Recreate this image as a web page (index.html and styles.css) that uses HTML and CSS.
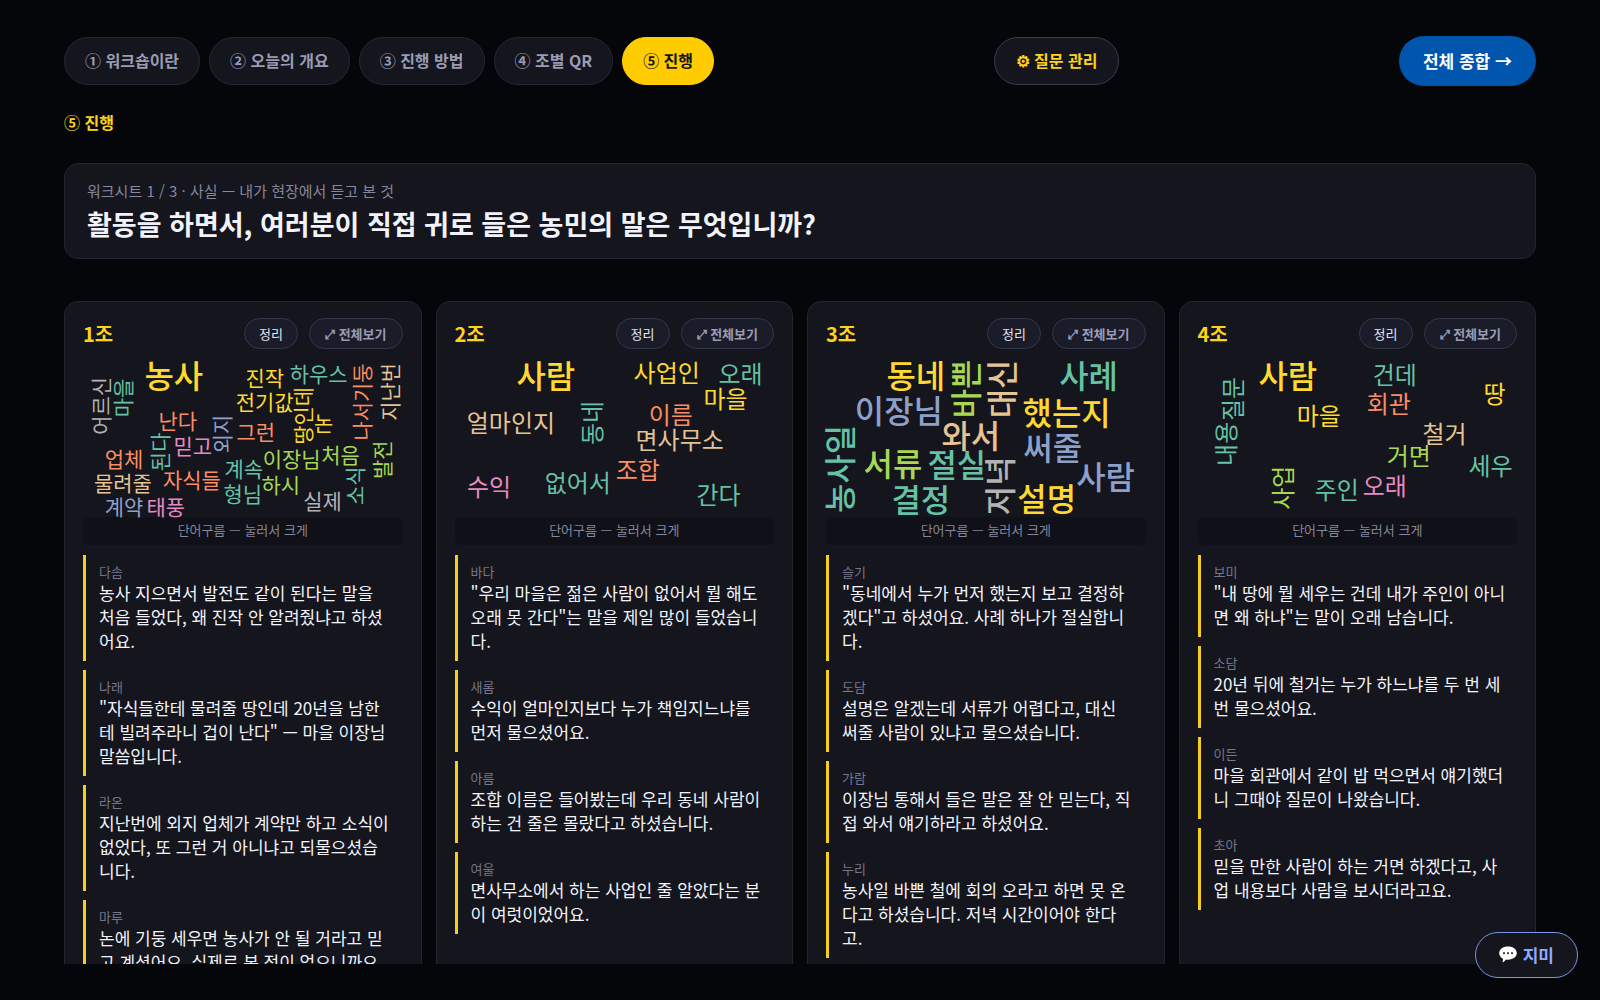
FILE: index.html
```html
<!DOCTYPE html>
<html lang="ko">
  <head>
    <meta charset="UTF-8" />
    <meta name="viewport" content="width=device-width, initial-scale=1.0" />
    <title>워크숍 진행</title>
    <link rel="stylesheet" href="styles.css">
  </head>
  <body>
    <div class="page">
      <header class="topbar">
        <nav class="steps">
          <button class="step">① 워크숍이란</button>
          <button class="step">② 오늘의 개요</button>
          <button class="step">③ 진행 방법</button>
          <button class="step">④ 조별 QR</button>
          <button class="step active">⑤ 진행</button>
        </nav>
        <button class="step manage">⚙ 질문 관리</button>
        <button class="summary">전체 종합 →</button>
      </header>

      <p class="current">⑤ 진행</p>

      <section class="question">
        <p class="sheet">워크시트 1 / 3 · 사실 — 내가 현장에서 듣고 본 것</p>
        <h1>활동을 하면서, 여러분이 직접 귀로 들은 농민의 말은 무엇입니까?</h1>
      </section>

      <main class="groups">
        <section class="group">
          <div class="group-head">
            <h2>1조</h2>
            <button class="pill">정리</button>
            <button class="pill wide">⤢ 전체보기</button>
          </div>
          <button class="cloud">
            <svg class="small" viewBox="0 0 320 160">
              <text class="big yellow" transform="translate(91 17)">농사</text>
              <text class="yellow" transform="translate(182 20)">진작</text>
              <text class="teal" transform="translate(236 16)">하우스</text>
              <text class="yellow" transform="translate(182 44)">전기값</text>
              <text class="yellow" transform="translate(219 59) rotate(-90)">땅인데</text>
              <text class="yellow" transform="translate(241 65)">논</text>
              <text class="gray" transform="translate(17 49) rotate(-90)">어르신</text>
              <text class="teal" transform="translate(39 41) rotate(-90)">마을</text>
              <text class="orange" transform="translate(95 63)">난다</text>
              <text class="blue" transform="translate(138 77) rotate(-90)">외지</text>
              <text class="orange" transform="translate(173 74)">그런</text>
              <text class="orange" transform="translate(278 45) rotate(-90)">나서기둥</text>
              <text class="tan" transform="translate(306 35) rotate(-90)">지난번</text>
              <text class="pink" transform="translate(110 88)">믿고</text>
              <text class="teal" transform="translate(76 95) rotate(-90)">된다</text>
              <text class="orange" transform="translate(41 101)">업체</text>
              <text class="green" transform="translate(209 101)">이장님</text>
              <text class="green" transform="translate(258 97)">처음</text>
              <text class="green" transform="translate(298 103) rotate(-90)">발전</text>
              <text class="teal" transform="translate(271 129) rotate(-90)">소식</text>
              <text class="teal" transform="translate(161 111)">계속</text>
              <text class="tan" transform="translate(40 125)">물려줄</text>
              <text class="orange" transform="translate(109 122)">자식들</text>
              <text class="green" transform="translate(198 127)">하시</text>
              <text class="teal" transform="translate(160 136)">형님</text>
              <text class="gray" transform="translate(240 143)">실제</text>
              <text class="blue" transform="translate(41 149)">계약</text>
              <text class="pink" transform="translate(83 149)">태풍</text>
            </svg>
            <span class="caption">단어구름 — 눌러서 크게</span>
          </button>
          <ul class="answers">
            <li>
              <span class="name">다솜</span>
              <p>농사 지으면서 발전도 같이 된다는 말을 처음 들었다, 왜 진작 안 알려줬냐고 하셨어요.</p>
            </li>
            <li>
              <span class="name">나래</span>
              <p>"자식들한테 물려줄 땅인데 20년을 남한테 빌려주라니 겁이 난다" — 마을 이장님 말씀입니다.</p>
            </li>
            <li>
              <span class="name">라온</span>
              <p>지난번에 외지 업체가 계약만 하고 소식이 없었다, 또 그런 거 아니냐고 되물으셨습니다.</p>
            </li>
            <li>
              <span class="name">마루</span>
              <p>논에 기둥 세우면 농사가 안 될 거라고 믿고 계셨어요. 실제로 본 적이 없으니까요.</p>
            </li>
          </ul>
        </section>

        <section class="group">
          <div class="group-head">
            <h2>2조</h2>
            <button class="pill">정리</button>
            <button class="pill wide">⤢ 전체보기</button>
          </div>
          <button class="cloud">
            <svg class="medium" viewBox="0 0 320 160">
              <text class="big yellow" transform="translate(91 17)">사람</text>
              <text class="yellow" transform="translate(212 15)">사업인</text>
              <text class="teal" transform="translate(286 16)">오래</text>
              <text class="yellow" transform="translate(271 41)">마을</text>
              <text class="tan" transform="translate(56 65)">얼마인지</text>
              <text class="teal" transform="translate(136 66) rotate(-90)">동네</text>
              <text class="orange" transform="translate(216 57)">이름</text>
              <text class="tan" transform="translate(225 82)">면사무소</text>
              <text class="orange" transform="translate(183 112)">조합</text>
              <text class="teal" transform="translate(123 125)">없어서</text>
              <text class="pink" transform="translate(34 129)">수익</text>
              <text class="teal" transform="translate(264 137)">간다</text>
            </svg>
            <span class="caption">단어구름 — 눌러서 크게</span>
          </button>
          <ul class="answers">
            <li>
              <span class="name">바다</span>
              <p>"우리 마을은 젊은 사람이 없어서 뭘 해도 오래 못 간다"는 말을 제일 많이 들었습니다.</p>
            </li>
            <li>
              <span class="name">새롬</span>
              <p>수익이 얼마인지보다 누가 책임지느냐를 먼저 물으셨어요.</p>
            </li>
            <li>
              <span class="name">아름</span>
              <p>조합 이름은 들어봤는데 우리 동네 사람이 하는 건 줄은 몰랐다고 하셨습니다.</p>
            </li>
            <li>
              <span class="name">여울</span>
              <p>면사무소에서 하는 사업인 줄 알았다는 분이 여럿이었어요.</p>
            </li>
          </ul>
        </section>

        <section class="group">
          <div class="group-head">
            <h2>3조</h2>
            <button class="pill">정리</button>
            <button class="pill wide">⤢ 전체보기</button>
          </div>
          <button class="cloud">
            <svg class="large" viewBox="0 0 320 160">
              <text class="yellow" transform="translate(90 17)">동네</text>
              <text class="green" transform="translate(138 32) rotate(-90)">바쁜</text>
              <text class="tan" transform="translate(174 32) rotate(-90)">대신</text>
              <text class="teal" transform="translate(263 17)">사례</text>
              <text class="blue" transform="translate(73 52)">이장님</text>
              <text class="yellow" transform="translate(241 54)">했는지</text>
              <text class="tan" transform="translate(145 77)">와서</text>
              <text class="teal" transform="translate(12 112) rotate(-90)">농사일</text>
              <text class="green" transform="translate(67 105)">서류</text>
              <text class="teal" transform="translate(131 106)">절실</text>
              <text class="blue" transform="translate(227 89)">써줄</text>
              <text class="gray" transform="translate(172 129) rotate(-90)">저녁</text>
              <text class="blue" transform="translate(280 118)">사람</text>
              <text class="teal" transform="translate(95 141)">결정</text>
              <text class="yellow" transform="translate(221 140)">설명</text>
            </svg>
            <span class="caption">단어구름 — 눌러서 크게</span>
          </button>
          <ul class="answers">
            <li>
              <span class="name">슬기</span>
              <p>"동네에서 누가 먼저 했는지 보고 결정하겠다"고 하셨어요. 사례 하나가 절실합니다.</p>
            </li>
            <li>
              <span class="name">도담</span>
              <p>설명은 알겠는데 서류가 어렵다고, 대신 써줄 사람이 있냐고 물으셨습니다.</p>
            </li>
            <li>
              <span class="name">가람</span>
              <p>이장님 통해서 들은 말은 잘 안 믿는다, 직접 와서 얘기하라고 하셨어요.</p>
            </li>
            <li>
              <span class="name">누리</span>
              <p>농사일 바쁜 철에 회의 오라고 하면 못 온다고 하셨습니다. 저녁 시간이어야 한다고.</p>
            </li>
          </ul>
        </section>

        <section class="group">
          <div class="group-head">
            <h2>4조</h2>
            <button class="pill">정리</button>
            <button class="pill wide">⤢ 전체보기</button>
          </div>
          <button class="cloud">
            <svg class="medium" viewBox="0 0 320 160">
              <text class="big yellow" transform="translate(90 17)">사람</text>
              <text class="teal" transform="translate(197 17)">건데</text>
              <text class="yellow" transform="translate(297 36)">땅</text>
              <text class="orange" transform="translate(191 46)">회관</text>
              <text class="yellow" transform="translate(121 58)">마을</text>
              <text class="teal" transform="translate(34 42) rotate(-90)">질문</text>
              <text class="teal" transform="translate(27 87) rotate(-90)">내용</text>
              <text class="tan" transform="translate(247 76)">철거</text>
              <text class="green" transform="translate(211 98)">거면</text>
              <text class="teal" transform="translate(293 108)">세우</text>
              <text class="green" transform="translate(84 131) rotate(-90)">사업</text>
              <text class="teal" transform="translate(139 132)">주인</text>
              <text class="pink" transform="translate(187 128)">오래</text>
            </svg>
            <span class="caption">단어구름 — 눌러서 크게</span>
          </button>
          <ul class="answers">
            <li>
              <span class="name">보미</span>
              <p>"내 땅에 뭘 세우는 건데 내가 주인이 아니면 왜 하냐"는 말이 오래 남습니다.</p>
            </li>
            <li>
              <span class="name">소담</span>
              <p>20년 뒤에 철거는 누가 하느냐를 두 번 세 번 물으셨어요.</p>
            </li>
            <li>
              <span class="name">이든</span>
              <p>마을 회관에서 같이 밥 먹으면서 얘기했더니 그때야 질문이 나왔습니다.</p>
            </li>
            <li>
              <span class="name">초아</span>
              <p>믿을 만한 사람이 하는 거면 하겠다고, 사업 내용보다 사람을 보시더라고요.</p>
            </li>
          </ul>
        </section>
      </main>
    </div>

    <button class="chat">
      <svg viewBox="0 0 18 18" width="18" height="18" aria-hidden="true">
        <path fill="#fff" d="M9 1.500c5 0 8.800 2.700 8.800 6.600s-3.800 6.600-8.800 6.600c-.7 0-1.400-.1-2-.2-.8 1.200-1.900 2.200-3 2.700-.3.100-.5-.1-.4-.4.400-1 .5-2 .3-3C1.600 12.700.200 10.500.200 8.100c0-3.900 3.800-6.600 8.800-6.600z"/>
        <circle cx="5" cy="8.200" r="1.100" fill="#3a3c48"/>
        <circle cx="9" cy="8.200" r="1.100" fill="#3a3c48"/>
        <circle cx="13" cy="8.200" r="1.100" fill="#3a3c48"/>
      </svg>
      지미
    </button>
  </body>
</html>
```
FILE: styles.css
```css
* {
  box-sizing: border-box;
}

body {
  margin: 0;
  background-color: #05060a;
  color: #f2f3fa;
  font-family: "Noto Sans CJK KR", "Noto Sans", sans-serif;
}

h1, h2, p, ul {
  margin: 0;
  padding: 0;
}

button {
  font-family: inherit;
  cursor: pointer;
}

.page {
  display: flex;
  flex-direction: column;
  height: 100vh;
  padding: 36px 64px;
}

.topbar {
  display: flex;
  justify-content: space-between;
  align-items: center;
}

.steps {
  display: flex;
  gap: 9px;
}

.step {
  height: 48px;
  padding: 0 20px 2px;
  border: 1px solid #262732;
  border-radius: 24px;
  background-color: #14151d;
  color: #9a9cb4;
  font-size: 16px;
  font-weight: 700;
}

.step.active {
  border-color: #ffcc00;
  background-color: #ffcc00;
  color: #14151d;
}

.step.manage {
  padding: 0 21px 2px;
  border-color: #3a3b4e;
  color: #ffd21a;
}

.summary {
  height: 50px;
  padding: 0 24px 2px;
  border: none;
  border-radius: 25px;
  background-color: #0055ad;
  color: #fff;
  font-size: 17px;
  font-weight: 700;
}

.current {
  margin: 24px 0 29px;
  color: #ffd21a;
  font-size: 16px;
  font-weight: 700;
  line-height: 24px;
}

.question {
  flex-shrink: 0;
  margin-bottom: 42px;
  padding: 16px 22px 12px;
  border: 1px solid #23252f;
  border-radius: 14px;
  background-color: #14151d;
}

.sheet {
  color: #85879a;
  font-size: 15px;
  line-height: 22px;
}

h1 {
  font-size: 27px;
  font-weight: 700;
  line-height: 44px;
}

.groups {
  display: grid;
  grid-template-columns: repeat(4, 1fr);
  gap: 14px;
  flex: 1;
  min-height: 0;
  overflow: hidden;
}

.group {
  padding: 16px 18px;
  border: 1px solid #23252f;
  border-radius: 14px;
  background-color: #14151d;
}

.group-head {
  display: flex;
  align-items: center;
  gap: 11px;
  margin-bottom: 8px;
}

h2 {
  flex: 1;
  color: #ffd21a;
  font-size: 20px;
  line-height: 31px;
}

.pill {
  height: 31px;
  padding: 0 14px;
  border: 1px solid #34364a;
  border-radius: 16px;
  background-color: #1a1c2a;
  color: #e4e5f0;
  font-size: 13px;
}

.pill.wide {
  padding: 0 15px;
  color: #9a9cb4;
  font-weight: 700;
}

.cloud {
  display: block;
  width: 100%;
  margin-bottom: 10px;
  padding: 0;
  border: none;
  background: none;
}

.cloud svg {
  display: block;
  width: 100%;
  overflow: visible;
}

.cloud text {
  font-weight: 400;
  text-anchor: middle;
  dominant-baseline: central;
}

.small {
  font-size: 21px;
}

.medium {
  font-size: 24px;
}

.large, .big {
  font-size: 32px;
}

.cloud .large text, .cloud .big {
  font-weight: 500;
}

.yellow { fill: #ffd92f; }
.teal { fill: #66c2a5; }
.orange { fill: #fc8d62; }
.blue { fill: #8da0cb; }
.pink { fill: #e78ac3; }
.green { fill: #a6d854; }
.tan { fill: #e5c494; }
.gray { fill: #b3b3b3; }

.caption {
  display: block;
  padding-bottom: 2px;
  border-radius: 6px;
  background-color: #101118;
  color: #85879a;
  font-size: 13px;
  line-height: 26px;
}

.answers {
  display: flex;
  flex-direction: column;
  gap: 9px;
  list-style: none;
}

.answers li {
  padding: 8px 10px 8px 13px;
  border-left: 3px solid #f5ce1e;
}

.name {
  display: block;
  color: #75778c;
  font-size: 13px;
  line-height: 18px;
}

.answers p {
  font-size: 17px;
  line-height: 24px;
}

.chat {
  position: fixed;
  right: 22px;
  bottom: 22px;
  display: flex;
  align-items: center;
  gap: 6px;
  height: 46px;
  padding: 0 23px 2px;
  border: 1px solid #7a94e6;
  border-radius: 23px;
  background-color: #14151d;
  color: #8fa8ff;
  font-size: 17px;
  font-weight: 700;
}
```
